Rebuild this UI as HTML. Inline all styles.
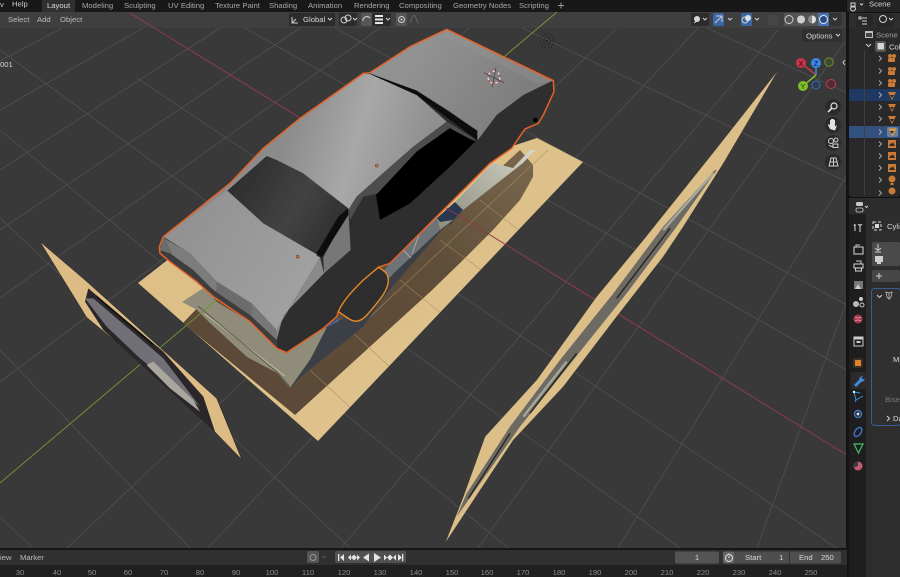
<!DOCTYPE html>
<html><head><meta charset="utf-8"><style>
html,body{margin:0;padding:0;background:#181818;overflow:hidden}
svg{display:block}
text{font-family:"Liberation Sans",sans-serif;font-size:7.7px;fill:#a8a8a8}
.w{fill:#d8d8d8}
.r{font-size:7.7px;fill:#8c8c8c;text-anchor:middle}
.ic{fill:none;stroke:#d0d0d0;stroke-width:1}
</style></head><body>
<svg width="900" height="577" viewBox="0 0 900 577" xmlns="http://www.w3.org/2000/svg">
<defs>
<linearGradient id="wood" x1="0" y1="0" x2="1" y2="1"><stop offset="0" stop-color="#dcbd85"/><stop offset="1" stop-color="#e0c48e"/></linearGradient>
<linearGradient id="roof" gradientUnits="userSpaceOnUse" x1="480" y1="300" x2="880" y2="420"><stop offset="0" stop-color="#8b8b8b"/><stop offset=".5" stop-color="#a8a8a8"/><stop offset="1" stop-color="#8f8f8f"/></linearGradient>
<linearGradient id="trunk" gradientUnits="userSpaceOnUse" x1="850" y1="110" x2="1130" y2="300"><stop offset="0" stop-color="#929292"/><stop offset="1" stop-color="#7e7e7e"/></linearGradient>
<linearGradient id="hood" gradientUnits="userSpaceOnUse" x1="150" y1="620" x2="500" y2="820"><stop offset="0" stop-color="#929292"/><stop offset="1" stop-color="#a0a0a0"/></linearGradient>
<linearGradient id="glass" gradientUnits="userSpaceOnUse" x1="330" y1="480" x2="600" y2="640"><stop offset="0" stop-color="#2f2f2f"/><stop offset=".6" stop-color="#434343"/><stop offset="1" stop-color="#323232"/></linearGradient>
<linearGradient id="shade" gradientUnits="userSpaceOnUse" x1="300" y1="400" x2="530" y2="170"><stop offset="0" stop-color="#5c4a37"/><stop offset=".6" stop-color="#5f4e3a"/><stop offset="1" stop-color="#77654b"/></linearGradient>
<linearGradient id="shine" gradientUnits="userSpaceOnUse" x1="437" y1="225" x2="530" y2="150"><stop offset="0" stop-color="#8f8f80"/><stop offset=".6" stop-color="#b5b5a8"/><stop offset="1" stop-color="#d4d4cc"/></linearGradient>
<clipPath id="plankclip"><polygon points="138,283 170,258 537,138 583,162 318,441"/></clipPath>
<filter id="soft" x="-2%" y="-2%" width="104%" height="104%"><feGaussianBlur stdDeviation=".35"/></filter>
</defs>

<rect width="900" height="577" fill="#181818"/>
<rect x="0" y="12" width="847" height="536" fill="#393939"/>

<g filter="url(#soft)">
<g stroke="#505050" stroke-width=".8" fill="none">
<path d="M62 28L0 61M143 28L0 110M220 28L0 170M300 28L0 230M380 28L0 298M470 28L0 382"/>
<path d="M617 28L67 548M698 28L208 548M778 30L341 548M845 42L478 548M847 175L618 548M847 300L757 548"/>
<path d="M707 28L847 93M522 28L847 182M335 28L847 305M245 28L847 370M137 78L847 555M0 50L680 548M0 130L508 548M0 218L350 548M0 350L190 548M0 517L33 548"/>
</g>

<!-- plank -->
<polygon points="138,283 170,258 537,138 583,162 318,441" fill="url(#wood)"/>
<g clip-path="url(#plankclip)">
<polygon points="183,323 205,300 400,260 520,150 533,165 533,177 520,200 493,230 460,263 430,292 295,415" fill="url(#shade)"/>
<g stroke="#a58c62" stroke-width=".7" fill="none" opacity=".75">
<path d="M340 345L548 150M358 430L578 170M480 200L560 262M440 240L530 305M400 280L480 345M350 330L420 395M310 370L380 435"/>
</g>
</g>
<!-- car body texture on plank -->
<polygon points="182,302 205,287 217,302 247,320 285,353 327,327 340,318 310,360 290,388 277,373 247,357 210,323 197,310" fill="#8f8d7a"/>
<polygon points="327,327 345,318 390,263 437,218 450,225 463,210 440,232 387,293 363,327 303,375 290,388 310,360" fill="#3b4047"/>
<polygon points="345,318 390,263 437,218 440,230 395,272 350,320" fill="#6e7378"/>
<polygon points="437,218 455,202 493,163 513,168 530,150 535,150 523,163 463,210 453,220 440,230" fill="url(#shine)"/>
<polygon points="437,218 455,202 463,210 453,220 440,222" fill="#2c3850"/>
<path d="M205 314L285 376" stroke="#c2bb9a" stroke-width="1"/>
<path d="M340 318l-8 6-8 3" stroke="#3f5f9e" stroke-width="1.500" fill="none"/>
<path d="M198 306L277 372L290 387" stroke="#5b5a4f" stroke-width="1" fill="none"/>
<path d="M420 232l-8 22M403 250l8 8" stroke="#a9a9a9" stroke-width="1" fill="none"/>

<!-- axis lines -->
<path d="M130 13L847 455" stroke="#8d3a4a" stroke-width="1"/>
<path d="M0 483L557 12" stroke="#6f9133" stroke-width="1"/>

<!-- left plane -->
<g transform="translate(30 230) scale(.33333)">
<polygon points="30,35 165,150 560,505 635,688 515,565 350,410 240,320 170,262" fill="#dcbc84" stroke="#222" stroke-width="1.500"/>
<polygon points="175,175 400,365 520,500 555,605 510,565 350,420 220,300 165,215" fill="#29282a"/>
<polygon points="165,205 190,205 400,385 510,530 430,465 330,385 230,290" fill="#6f7076"/>
<polygon points="350,405 370,395 490,510 510,545 420,475" fill="#a9a79d"/>
<path d="M200 200L370 345" stroke="#111" stroke-width="4"/>
</g>

<!-- right plane -->
<g transform="translate(430 60) scale(.33333)">
<polygon points="1045,30 880,310 760,500 700,590 560,770 400,980 250,1140 45,1450 100,1310 165,1130 320,960 500,710 640,540 840,290" fill="#dcbf88" stroke="#2a2a2a" stroke-width="1"/>
<polygon points="855,330 700,500 550,700 390,900 240,1100 110,1300 80,1370 270,1100 430,900 590,700 740,500 860,330" fill="#6c6a63"/>
<path d="M720 505L560 715M440 880L300 1060M240 1120L115 1315" stroke="#26241d" stroke-width="4" fill="none"/>
<path d="M850 340L700 510M410 905L280 1070" stroke="#a9a79c" stroke-width="7" fill="none"/>
</g>

<!-- car -->
<g transform="translate(130 20) scale(.33333)">
<polygon points="950,28 1270,182 1272,215 1240,285 1225,310 1185,327 1145,385 1080,430 970,540 920,590 780,730 745,742 625,875 620,890 580,925 470,998 440,985 360,905 250,830 200,785 120,725 90,700 88,680 100,650 300,490 400,385 510,295 700,160 720,158 840,80" fill="#2f2f2f"/>
<polygon points="720,160 840,80 950,28 1268,182 1180,225 1100,285 1042,362 1040,332 960,275 860,212" fill="url(#trunk)"/>
<polygon points="950,28 1268,182 1225,192 945,50" fill="#9c9c9c" opacity=".25"/>
<polygon points="100,650 300,490 400,385 510,295 700,162 720,162 860,225 950,305 850,380 770,450 680,530 655,570 560,705 440,930 365,850 260,785 180,700" fill="url(#roof)"/>
<polygon points="100,650 292,512 555,705 570,712 460,895 440,930 365,850 260,785 180,700" fill="url(#hood)"/>
<polygon points="88,690 100,652 180,700 260,785 365,850 440,930 440,985 360,905 250,830 200,785 120,725" fill="#6c6c6c"/>
<polygon points="180,700 260,785 258,815 200,770 130,712 110,662" fill="#7c7c7c"/>
<polygon points="365,850 440,930 440,975 365,895" fill="#777"/>
<polygon points="88,690 120,700 190,750 250,810 360,885 440,960 440,985 360,905 250,830 200,785 120,725 90,700" fill="#3e3e3e"/>
<polygon points="580,712 655,570 662,690 582,760" fill="#777"/>
<polygon points="570,712 582,760 460,885 440,960 440,930 460,895" fill="#8a8a8a"/>
<polygon points="292,512 410,408 440,420 520,460 655,565 630,590 570,710 555,700 400,610" fill="url(#glass)"/>
<polygon points="655,565 655,585 575,712 560,700 625,590" fill="#0c0c0c"/>
<polygon points="655,570 680,530 770,450 850,380 950,305 1040,360 1000,355 960,322 860,395 745,520 700,530 660,600" fill="#4e4e4e"/>
<polygon points="738,525 860,395 960,325 1035,365 960,440 840,550 750,600" fill="#020202"/>
<polygon points="720,162 860,212 960,278 1042,332 1042,362 960,300 860,225" fill="#0e0e0e"/>
<circle cx="1216" cy="300" r="7" fill="#000"/>
<polygon points="950,28 1270,182 1272,215 1240,285 1225,310 1185,327 1145,385 1080,430 970,540 920,590 780,730 745,742 625,875 620,890 580,925 470,998 440,985 360,905 250,830 200,785 120,725 90,700 88,680 100,650 300,490 400,385 510,295 700,160 720,158 840,80" fill="none" stroke="#e4622c" stroke-width="4.500"/>
<path d="M745 742C760 750 775 760 775 780C775 815 740 850 715 880C695 905 675 910 655 895L625 875C640 840 670 810 700 780Z" fill="#2f2f2f" stroke="#ee8a22" stroke-width="4"/>
<circle cx="740" cy="437" r="4.500" fill="#e8772c" stroke="#3a1e10" stroke-width="1.500"/>
<circle cx="503" cy="710" r="4.500" fill="#e8772c" stroke="#3a1e10" stroke-width="1.500"/>
<circle cx="1092" cy="172" r="18" fill="none" stroke="#e9e9e9" stroke-width="3.500" stroke-dasharray="9 7"/>
<circle cx="1092" cy="172" r="18" fill="none" stroke="#cf4040" stroke-width="3.500" stroke-dasharray="7 9" stroke-dashoffset="8"/>
<path d="M1062 158L1122 188M1098 143L1086 202" stroke="#3a3a3a" stroke-width="2"/>
</g>

<g transform="translate(547 41)" stroke="#222" fill="none" stroke-dasharray="1.500 1.500"><circle r="7"/><circle r="3.500"/></g>
<circle cx="547" cy="41" r="1" fill="#222"/>
</g>

<!-- header overlay -->
<rect x="0" y="12" width="847" height="16" fill="#fff" opacity=".035"/>
<text x="8" y="22" style="fill:#bcbcbc">Select</text>
<text x="37" y="22" style="fill:#bcbcbc">Add</text>
<text x="60" y="22" style="fill:#bcbcbc">Object</text>
<text x="0" y="67" style="fill:#d5d5d5">001</text>

<rect x="289" y="13" width="46" height="13" rx="2" fill="#2c2c2c"/>
<path d="M292 17v6h6M292 23l4-4" class="ic"/>
<text x="303" y="22" class="w">Global</text>
<path d="M328 18l2 2 2-2" class="ic"/>
<rect x="339" y="13" width="18" height="13" rx="2" fill="#2c2c2c"/>
<circle cx="344" cy="20" r="3" class="ic"/><circle cx="348" cy="18" r="3" class="ic"/><path d="M353 18l2 2 2-2" class="ic"/>
<rect x="361" y="13" width="11" height="13" rx="2" fill="#565656"/>
<path d="M363 21a4 4 0 0 1 7-3" class="ic"/>
<rect x="372" y="13" width="19" height="13" rx="2" fill="#2c2c2c"/>
<rect x="375" y="15" width="8" height="2" fill="#e6e6e6"/><rect x="375" y="18.500" width="8" height="2" fill="#e6e6e6"/><rect x="375" y="22" width="8" height="2" fill="#e6e6e6"/>
<path d="M386 18l2 2 2-2" class="ic"/>
<rect x="396" y="13" width="11" height="13" rx="2" fill="#565656"/>
<circle cx="401.500" cy="19.500" r="3" class="ic"/><circle cx="401.500" cy="19.500" r="1" fill="#d0d0d0"/>
<path d="M410 23q3-8 4-8t4 8" fill="none" stroke="#666"/>

<rect x="691" y="13" width="18" height="13" rx="2" fill="#2c2c2c"/>
<circle cx="697" cy="19" r="3" fill="#d8d8d8"/><path d="M694 23l4-3M703 18l2 2 2-2" class="ic"/>
<rect x="713" y="13" width="11" height="13" rx="2" fill="#3a66a8"/>
<path d="M715 23l7-7M716 16h6v6" class="ic"/>
<path d="M728 18l2 2 2-2" class="ic"/>
<rect x="741" y="13" width="11" height="13" rx="2" fill="#3a66a8"/>
<circle cx="745" cy="20" r="3" class="ic"/><circle cx="748" cy="18" r="3" fill="#e0e0e0"/>
<path d="M755 18l2 2 2-2" class="ic"/>
<rect x="768" y="15" width="10" height="10" fill="#464646"/>
<rect x="784" y="13" width="58" height="13" rx="2" fill="#2c2c2c" opacity=".6"/>
<rect x="784" y="13" width="11" height="13" fill="#545454"/>
<rect x="795" y="13" width="12" height="13" fill="#545454"/>
<rect x="807" y="13" width="11" height="13" fill="#545454"/>
<rect x="818" y="13" width="11" height="13" fill="#4773b3"/>
<circle cx="789" cy="19.500" r="4" class="ic"/>
<circle cx="801" cy="19.500" r="4" fill="#cfcfcf"/>
<circle cx="812" cy="19.500" r="4" fill="#8a8a8a"/><path d="M812 15.500a4 4 0 0 1 0 8z" fill="#e0e0e0"/>
<circle cx="823.500" cy="19.500" r="4" fill="#284b86" stroke="#e8e8e8"/>
<path d="M833 18l2 2 2-2" class="ic"/>

<rect x="802" y="29" width="40" height="13" rx="2" fill="#2e2e2e" opacity=".8"/>
<text x="806" y="38.500" class="w">Options</text>
<path d="M836 34l2 2 2-2" class="ic"/>
<path d="M845 60l-2 2.500 2 2.500" class="ic" stroke-width=".8"/>

<!-- gizmo -->
<path d="M801 63L816 75" stroke="#c6354f" stroke-width="1.500"/>
<path d="M816 63V75" stroke="#3b88e6" stroke-width="1.500"/>
<path d="M803 86L816 75" stroke="#7fc02a" stroke-width="1.500"/>
<circle cx="829" cy="62" r="4.300" fill="#3e4a2c" stroke="#6b8f2e" stroke-width="1"/>
<circle cx="816" cy="85" r="4" fill="#2f3d52" stroke="#3a6eb0" stroke-width="1"/>
<circle cx="831" cy="84" r="4.500" fill="#4f2c36" stroke="#c43a55" stroke-width="1"/>
<circle cx="801" cy="63" r="5" fill="#c6354f"/><text x="801" y="66" text-anchor="middle" style="fill:#300;font-size:7px">X</text>
<circle cx="816" cy="63" r="5" fill="#3b88e6"/><text x="816" y="66" text-anchor="middle" style="fill:#012;font-size:7px">Z</text>
<circle cx="803" cy="86" r="5" fill="#7fc02a"/><text x="803" y="89" text-anchor="middle" style="fill:#130;font-size:7px">Y</text>

<g fill="#2a2a2a"><circle cx="833" cy="107" r="8"/><circle cx="833" cy="125" r="8"/><circle cx="833" cy="143" r="8"/><circle cx="833" cy="162" r="8"/></g>
<circle cx="834" cy="106" r="3" fill="none" stroke="#e0e0e0" stroke-width="1.200"/><path d="M832 108l-4 4" stroke="#e0e0e0" stroke-width="1.600"/>
<path d="M830 129l-2-4v-1l2 1v-5h1v4-5h1.500v5-5h1.500v5-4h1v7l1-1.500h1l-2 5z" fill="#e0e0e0"/>
<circle cx="831" cy="141" r="2.500" class="ic"/><circle cx="836" cy="140" r="2" class="ic"/><rect x="833" y="144" width="5" height="3.500" fill="none" stroke="#d0d0d0"/><path d="M829 145q2 2 4 1" class="ic"/>
<path d="M829 166l2-8h5l2 8zM833.500 158v8M830 162h7" class="ic"/>

<!-- top bar -->
<rect x="0" y="0" width="847" height="12" fill="#181818"/>
<rect x="42" y="0" width="33" height="12" fill="#303030"/>
<text x="0" y="7" style="fill:#c8c8c8">v</text>
<text x="12" y="6.500" style="fill:#cfcfcf">Help</text>
<text x="47" y="8" style="fill:#dedede">Layout</text>
<g style="fill:#9d9d9d">
<text x="82" y="8.200">Modeling</text><text x="124" y="8.200">Sculpting</text><text x="168" y="8.200">UV Editing</text><text x="215" y="8.200">Texture Paint</text><text x="269" y="8.200">Shading</text><text x="308" y="8.200">Animation</text><text x="354" y="8.200">Rendering</text><text x="399" y="8.200">Compositing</text><text x="453" y="8.200">Geometry Nodes</text><text x="519" y="8.200">Scripting</text>
</g>
<path d="M561 2.500v6M558 5.500h6" stroke="#999" fill="none"/>

<!-- right column -->
<rect x="847" y="0" width="53" height="577" fill="#111"/>
<rect x="846" y="0" width="3" height="577" fill="#141414"/>
<rect x="847" y="0" width="18" height="12" rx="2" fill="#2a2a2a"/>
<path d="M851 3h4v4h-4zM853 6a2.500 2.500 0 1 0 .1 0" class="ic" stroke-width=".8"/>
<path d="M860 3.500l1.500 1.500 1.500-1.500" class="ic"/>
<rect x="865" y="0" width="35" height="12" fill="#242424"/>
<text x="869" y="6.500" class="w">Scene</text>

<!-- outliner -->
<rect x="849" y="13" width="51" height="184" rx="3" fill="#292929"/>
<rect x="849" y="13" width="51" height="15" fill="#2e2e2e"/>
<rect x="856" y="14" width="17" height="13" rx="2" fill="#272727"/>
<path d="M859 17h2v2h-2zM862 18h5M862 21h5M862 24h5" class="ic" stroke-width=".9"/>
<rect x="877" y="14" width="17" height="13" rx="2" fill="#272727"/>
<circle cx="883" cy="19" r="3.500" class="ic"/>
<path d="M889 18l2 2 2-2" class="ic"/>
<rect x="849" y="89" width="51" height="12" fill="#1f3a62"/>
<rect x="849" y="126" width="51" height="12" fill="#33517f"/>
<path d="M864.500 50V195" stroke="#3f3f3f"/>
<rect x="865" y="31" width="8" height="7" fill="#cfcfcf" opacity=".9"/><rect x="866" y="33" width="6" height="4" fill="#444"/>
<text x="876" y="37.500" style="fill:#9f9f9f">Scene C</text>
<path d="M866 44l2.500 2.500 2.500-2.500" class="ic"/>
<rect x="875" y="41" width="11" height="11" rx="2" fill="#555"/><rect x="877.500" y="43" width="6.500" height="6.500" fill="#d5d5d5"/>
<text x="889" y="49.500" class="w">Col</text>
<g fill="none" stroke="#b0b0b0" stroke-width=".9">
<path d="M879 56l2.500 2.500-2.500 2.500M879 68.500l2.500 2.500-2.500 2.500M879 80.500l2.500 2.500-2.500 2.500M879 92.500l2.500 2.500-2.500 2.500M879 104.500l2.500 2.500-2.500 2.500M879 116.500l2.500 2.500-2.500 2.500M879 129.500l2.500 2.500-2.500 2.500M879 141.500l2.500 2.500-2.500 2.500M879 153.500l2.500 2.500-2.500 2.500M879 165.500l2.500 2.500-2.500 2.500M879 177.500l2.500 2.500-2.500 2.500M879 190.500l2.500 2.500-2.500 2.500"/>
</g>
<g fill="#c87a36">
<circle cx="890" cy="56" r="2"/><circle cx="894" cy="56" r="2"/><rect x="888" y="58" width="7" height="4" rx="1"/>
<circle cx="890" cy="69" r="2"/><circle cx="894" cy="69" r="2"/><rect x="888" y="71" width="7" height="4" rx="1"/>
<circle cx="890" cy="81" r="2"/><circle cx="894" cy="81" r="2"/><rect x="888" y="83" width="7" height="4" rx="1"/>
<path d="M888 92h8l-4 8zM888 104h8l-4 8zM888 116h8l-4 8z"/>
<rect x="887" y="127" width="11" height="10" rx="2" fill="#6c7f9c"/>
<path d="M888.500 128.500h8l-4 8z" fill="#e09a3c"/>
<rect x="888" y="140" width="8" height="8"/><rect x="888" y="152" width="8" height="8"/><rect x="888" y="164" width="8" height="8"/>
<circle cx="892" cy="179" r="3.500"/><rect x="890.500" y="183" width="3" height="2"/>
<circle cx="892" cy="191" r="3.500"/>
</g>
<g fill="#2a2a2a"><path d="M890 95h4l-2 3zM890 107h4l-2 3zM890 119h4l-2 3zM890 131h4l-2 3zM889 146l2-3 1 1 1-2 2 4zM889 158l2-3 1 1 1-2 2 4zM889 170l2-3 1 1 1-2 2 4z"/></g>

<!-- properties -->
<rect x="849" y="198" width="51" height="379" fill="#2a2a2a"/>
<rect x="849" y="198" width="51" height="16" fill="#2c2c2c"/>
<rect x="856" y="202" width="7" height="4" rx="1.500" fill="#c8c8c8"/><rect x="856" y="208" width="7" height="4" rx="1.500" fill="none" stroke="#c8c8c8" stroke-width=".8"/>
<path d="M865 206l1.500 1.500 1.500-1.500" class="ic"/>
<rect x="849" y="214" width="17" height="363" fill="#1e1e1e"/>
<rect x="851" y="372" width="15" height="17" rx="2" fill="#2b2b2b"/>
<g fill="none" stroke="#c8c8c8" stroke-width="1.100">
<path d="M855 224v7M855 224l-1 2M860 224v8M858 224q2 3 4 0"/>
<rect x="854" y="247" width="9" height="7"/><path d="M856 247v-2h4"/>
<rect x="854" y="264" width="9" height="4"/><rect x="855.500" y="268" width="6" height="3"/><path d="M856 261h5v3"/>
</g>
<rect x="854" y="281" width="9" height="8" fill="#777"/><path d="M855 289l3-5 3 5z" fill="#ccc"/>
<circle cx="856" cy="304" r="3" fill="#bbb"/><circle cx="861" cy="299" r="2" fill="#ccc"/><circle cx="862" cy="305" r="2" fill="none" stroke="#ccc"/>
<circle cx="858" cy="319" r="4.500" fill="#a9384f"/><path d="M855 317q3 2 6 0M855 321q3-2 6 0" stroke="#e1a4b0" fill="none" stroke-width=".8"/>
<rect x="854" y="337" width="9" height="9" fill="none" stroke="#ccc"/><rect x="854" y="337" width="9" height="2.500" fill="#ccc"/><rect x="856.500" y="341" width="4" height="2" fill="#ccc"/>
<rect x="853" y="358" width="10" height="10" rx="2" fill="#3d3026"/><rect x="855" y="360" width="6" height="6" fill="#e0812e"/>
<path d="M854 385l5-5 1-3 3-1-1.500 2 1.500 1.500 1.500-1.500-.5 3-3 1-5 5z" fill="#3f8ce0"/>
<path d="M854 392l2 8 7-4M856 400l-1 2M854 392l6 1" stroke="#3f8ce0" fill="none"/><circle cx="854" cy="392" r="1.200" fill="#cfe"/>
<circle cx="858" cy="414" r="3.500" fill="none" stroke="#3f79c0" stroke-width="1.500"/><circle cx="858" cy="414" r="1.500" fill="#dde"/>
<ellipse cx="858" cy="432" rx="3" ry="5" transform="rotate(35 858 432)" fill="none" stroke="#3f6fc0" stroke-width="1.500"/>
<path d="M854 444h9l-4.500 9z" fill="none" stroke="#45c06a" stroke-width="1.200"/>
<circle cx="858" cy="466" r="4.500" fill="#c25b6b"/><path d="M858 466v-4.500a4.500 4.500 0 0 0-4 6z" fill="#3a3a3a"/>

<rect x="866" y="214" width="34" height="363" fill="#2d2d2d"/>
<rect x="873" y="222" width="8" height="8" fill="none" stroke="#d8d8d8" stroke-dasharray="3 2"/><rect x="875" y="224" width="4" height="4" fill="#d8d8d8"/>
<text x="887" y="229" class="w">Cyli</text>
<rect x="872" y="242" width="28" height="24" rx="2" fill="#4a4a4a"/>
<path d="M875 248l3 2.500 3-2.500M878 244v6M875 252h6" class="ic"/>
<rect x="875" y="256" width="8" height="6" fill="#cfcfcf"/><rect x="877" y="262" width="4" height="2" fill="#cfcfcf"/>
<rect x="872" y="270" width="28" height="12" rx="2" fill="#474747"/>
<path d="M879 273v6M876 276h6" class="ic"/>
<rect x="871.500" y="288.500" width="29" height="137" rx="3" fill="#303030" stroke="#3a5c94"/>
<path d="M877 295l2.500 2.500 2.500-2.500" class="ic"/>
<path d="M889 293l-3-1 1 5 2 2v-6l3-1-1 5-2 2" fill="none" stroke="#bcbcbc" stroke-width=".8"/>
<text x="893" y="362" class="w">Mi</text>
<text x="885" y="402" style="fill:#777">Bisec</text>
<path d="M887 416l2.500 2.500-2.500 2.500" class="ic"/>
<text x="893" y="421" class="w">Da</text>

<!-- timeline -->
<rect x="0" y="548" width="847" height="2" fill="#161616"/>
<rect x="0" y="550" width="847" height="15" fill="#303030"/>
<rect x="0" y="565" width="847" height="12" fill="#202020"/>
<text x="-5" y="560" style="fill:#bbb">View</text>
<text x="20" y="560" style="fill:#bbb">Marker</text>
<rect x="307" y="551" width="12" height="12" rx="2" fill="#555"/>
<circle cx="313" cy="557.500" r="3" fill="none" stroke="#9a9a9a"/>
<path d="M322 556l2 2 2-2" fill="none" stroke="#555"/>
<rect x="335" y="551" width="71" height="12" rx="2" fill="#505050"/>
<g fill="#e4e4e4">
<rect x="338" y="554" width="1.300" height="7"/><path d="M344 554v7l-4-3.500z"/>
<path d="M351 557.500l3-3 3 3-3 3zM348 557.500l3-3v6zM360 557.500l-3-3v6z"/>
<path d="M369 553.500v8l-6-4z"/>
<path d="M374 553v9l7-4.500z"/>
<path d="M387 557.500l3-3 3 3-3 3zM384 554.500l3 3-3 3zM396 554.500l-3 3 3 3z"/>
<path d="M398 554v7l4-3.500z"/><rect x="402" y="554" width="1.300" height="7"/>
</g>
<rect x="675" y="551.500" width="44" height="12" rx="2" fill="#545454"/>
<text x="697" y="560" text-anchor="middle" class="w">1</text>
<rect x="723" y="551.500" width="118" height="12" rx="2" fill="#4e4e4e"/>
<rect x="723" y="551.500" width="11" height="12" rx="2" fill="#666"/>
<circle cx="729" cy="558" r="3.500" fill="none" stroke="#ddd"/><path d="M729 553.500v1M729 558v-2" stroke="#ddd"/>
<rect x="789" y="551.500" width="1" height="12" fill="#333"/>
<text x="745" y="560" class="w">Start</text>
<text x="779" y="560" class="w">1</text>
<text x="799" y="560" class="w">End</text>
<text x="821" y="560" class="w">250</text>

<g>
<text class="r" x="20" y="575">30</text><text class="r" x="57" y="575">40</text><text class="r" x="92" y="575">50</text><text class="r" x="128" y="575">60</text><text class="r" x="164" y="575">70</text><text class="r" x="200" y="575">80</text><text class="r" x="236" y="575">90</text><text class="r" x="272" y="575">100</text><text class="r" x="308" y="575">110</text><text class="r" x="344" y="575">120</text><text class="r" x="380" y="575">130</text><text class="r" x="416" y="575">140</text><text class="r" x="452" y="575">150</text><text class="r" x="487" y="575">160</text><text class="r" x="523" y="575">170</text><text class="r" x="559" y="575">180</text><text class="r" x="595" y="575">190</text><text class="r" x="631" y="575">200</text><text class="r" x="667" y="575">210</text><text class="r" x="703" y="575">220</text><text class="r" x="739" y="575">230</text><text class="r" x="775" y="575">240</text><text class="r" x="811" y="575">250</text>
</g>
</svg>
</body></html>
